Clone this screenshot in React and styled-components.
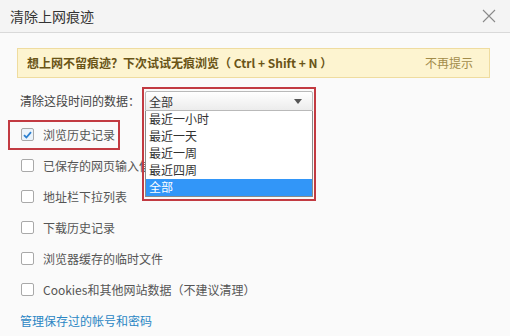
import React from 'react'
import styled, { createGlobalStyle } from 'styled-components';

const Global = createGlobalStyle`
  html, body { margin: 0; padding: 0; }
  body {
    width: 510px;
    height: 336px;
    overflow: hidden;
    font-family: "Noto Sans CJK SC", "Noto Sans", sans-serif;
    background: #fafafa;
  }
`;

const Dialog = styled.div`
  width: 510px;
  height: 336px;
  background: #fafafa;
  display: flex;
  flex-direction: column;
`;

const Header = styled.div`
  height: 33px;
  border-bottom: 1px solid #d9d9d9;
  background: #f4f4f4;
  display: flex;
  align-items: center;
  justify-content: space-between;
  padding: 0 13px 0 10px;
`;

const Title = styled.div`
  font-size: 14px;
  color: #333;
  line-height: 20px;
`;

const Close = styled.button`
  border: none;
  background: none;
  padding: 0;
  width: 16px;
  height: 16px;
  display: flex;
  align-items: center;
  justify-content: center;
`;

const Body = styled.div`
  padding: 15px 20px 0 17px;
  display: flex;
  flex-direction: column;
`;

const Banner = styled.div`
  height: 28px;
  border: 1px solid #efdc9f;
  background: #fdf4d0;
  display: flex;
  align-items: center;
  justify-content: space-between;
  padding: 0 16px 0 9px;
  font-size: 12px;
  line-height: 16px;
`;

const Tip = styled.span`
  color: #6a5417;
  font-weight: bold;
`;

const Dismiss = styled.span`
  color: #a28c4a;
`;

const TimeRow = styled.div`
  position: relative;
  z-index: 2;
  margin-top: 13px;
  height: 20px;
  padding-left: 3px;
  display: flex;
  align-items: center;
`;

const Label = styled.span`
  width: 125px;
  font-size: 12px;
  color: #444;
  line-height: 16px;
`;

const SelectWrap = styled.div`
  position: relative;
  width: 168px;
  height: 20px;

  &::after {
    content: '';
    position: absolute;
    left: -3px;
    top: -4px;
    width: 170px;
    height: 110px;
    border: 2px solid #c23a41;
    pointer-events: none;
  }
`;

const SelectBox = styled.div`
  box-sizing: border-box;
  height: 20px;
  border: 1px solid #b9b9b9;
  border-radius: 2px 2px 0 0;
  background: linear-gradient(#ffffff, #ececec);
  display: flex;
  align-items: center;
  justify-content: space-between;
  padding: 0 10px 0 3px;
  font-size: 12px;
  color: #333;
`;

const Arrow = styled.span`
  width: 0;
  height: 0;
  border-left: 4px solid transparent;
  border-right: 4px solid transparent;
  border-top: 5px solid #555;
`;

const List = styled.ul`
  position: absolute;
  left: 0;
  top: 20px;
  width: 168px;
  box-sizing: border-box;
  margin: 0;
  padding: 0;
  list-style: none;
  background: #fff;
  border: 1px solid #8a8a8a;
  border-top: none;
`;

const Option = styled.li`
  height: 17px;
  line-height: 16px;
  padding-left: 3px;
  font-size: 12px;
  color: ${p => (p.selected ? '#fff' : '#333')};
  background: ${p => (p.selected ? '#3296f8' : 'transparent')};
`;

const Checks = styled.div`
  margin-top: 8px;
  display: flex;
  flex-direction: column;
`;

const Row = styled.label`
  position: relative;
  height: 31px;
  display: flex;
  align-items: center;
  gap: 9px;
  padding-left: 4px;
  font-size: 12px;
  color: #555;
  line-height: 16px;
  white-space: nowrap;

  ${p => p.marked && `
    &::after {
      content: '';
      position: absolute;
      left: -9px;
      top: 1px;
      width: 108px;
      height: 26px;
      border: 2px solid #c23a41;
    }
  `}
`;

const Box = styled.span`
  box-sizing: border-box;
  flex: none;
  width: 13px;
  height: 13px;
  border: 1px solid #a9a9a9;
  border-radius: 2px;
  background: ${p => (p.checked ? '#eaf3fb' : '#fff')};
  display: flex;
  align-items: center;
  justify-content: center;
`;

const Link = styled.a`
  height: 31px;
  display: flex;
  align-items: center;
  padding-left: 3px;
  font-size: 12px;
  color: #2a86c4;
  text-decoration: none;
`;

const items = [
  '浏览历史记录',
  '已保存的网页输入信息',
  '地址栏下拉列表',
  '下载历史记录',
  '浏览器缓存的临时文件',
  'Cookies和其他网站数据（不建议清理）',
];

const ranges = ['最近一小时', '最近一天', '最近一周', '最近四周', '全部'];

function App() {
  return (
    <Dialog>
      <Global />
      <Header>
        <Title>清除上网痕迹</Title>
        <Close>
          <svg width="14" height="14" viewBox="0 0 14 14">
            <path d="M1 1L13 13M13 1L1 13" stroke="#8a8a8a" strokeWidth="1.1" />
          </svg>
        </Close>
      </Header>
      <Body>
        <Banner>
          <Tip>想上网不留痕迹？下次试试无痕浏览（ Ctrl + Shift + N ）</Tip>
          <Dismiss>不再提示</Dismiss>
        </Banner>
        <TimeRow>
          <Label>清除这段时间的数据：</Label>
          <SelectWrap>
            <SelectBox>
              全部
              <Arrow />
            </SelectBox>
            <List>
              {ranges.map(r => (
                <Option key={r} selected={r === '全部'}>{r}</Option>
              ))}
            </List>
          </SelectWrap>
        </TimeRow>
        <Checks>
          {items.map((t, i) => (
            <Row key={t} marked={i === 0}>
              <Box checked={i === 0}>
                {i === 0 && (
                  <svg width="9" height="8" viewBox="0 0 9 8">
                    <path d="M1 4.2L3.4 6.5L8 1.2" fill="none" stroke="#2b7fd0" strokeWidth="1.8" />
                  </svg>
                )}
              </Box>
              {t}
            </Row>
          ))}
          <Link href="#">管理保存过的帐号和密码</Link>
        </Checks>
      </Body>
    </Dialog>
  )
}

export default App
